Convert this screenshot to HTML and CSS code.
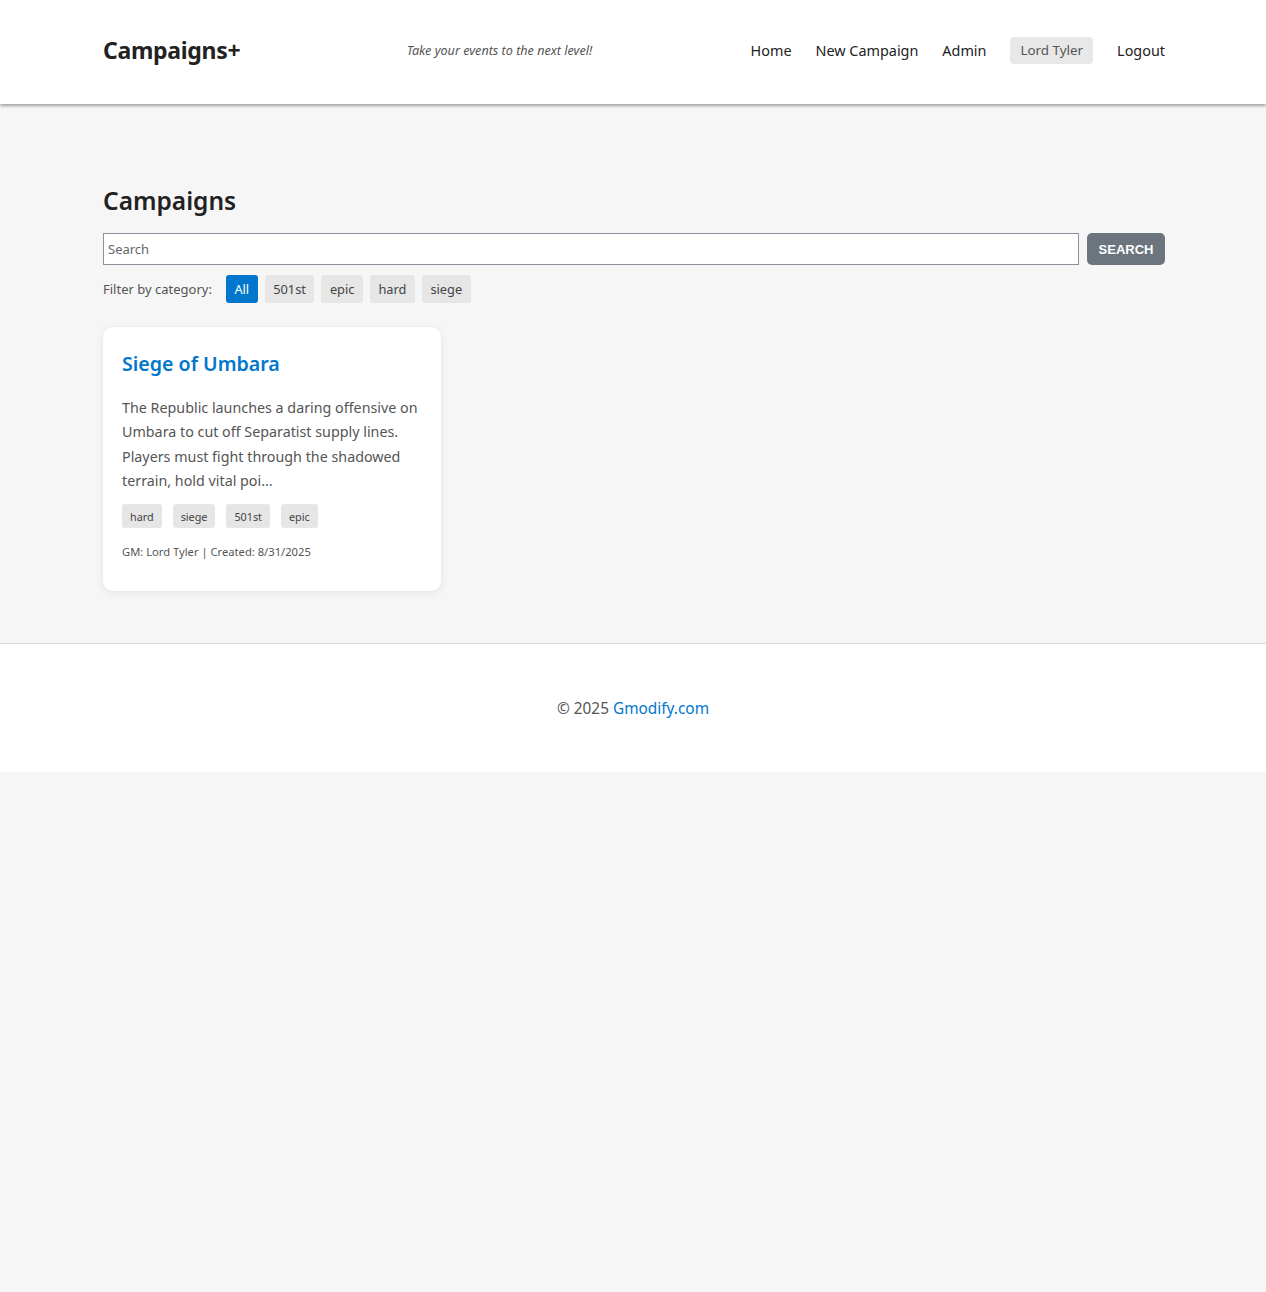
FILE: index.html
```html
<!DOCTYPE html>
<html lang="en">
<head>
<meta charset="utf-8">
<title>Campaigns+</title>
<link rel="stylesheet" href="styles.css">
</head>
<body>
<header class="site-header">
  <div class="container header-inner">
    <div class="logo">Campaigns+</div>
    <div class="tagline">Take your events to the next level!</div>
    <nav class="nav">
      <a class="nav-link" href="#">Home</a>
      <a class="nav-link" href="#">New Campaign</a>
      <a class="nav-link" href="#">Admin</a>
      <span class="nav-user">Lord Tyler</span>
      <a class="nav-link" href="#">Logout</a>
    </nav>
  </div>
</header>
<main class="container main">
  <h1 class="page-title">Campaigns</h1>
  <form class="search-row">
    <input class="search-input" type="text" placeholder="Search">
    <button class="search-btn" type="button">SEARCH</button>
  </form>
  <div class="filter-row">
    <span class="filter-label">Filter by category:</span>
    <button class="chip chip-active" type="button">All</button>
    <button class="chip" type="button">501st</button>
    <button class="chip" type="button">epic</button>
    <button class="chip" type="button">hard</button>
    <button class="chip" type="button">siege</button>
  </div>
  <div class="cards">
    <article class="card">
      <h2 class="card-title">Siege of Umbara</h2>
      <p class="card-desc">The Republic launches a daring offensive on Umbara to cut off Separatist supply lines. Players must fight through the shadowed terrain, hold vital poi...</p>
      <div class="tags">
        <span class="tag">hard</span>
        <span class="tag">siege</span>
        <span class="tag">501st</span>
        <span class="tag">epic</span>
      </div>
      <div class="card-meta">GM: Lord Tyler | Created: 8/31/2025</div>
    </article>
  </div>
</main>
<footer class="site-footer">
  <p>© 2025 <a href="#">Gmodify.com</a></p>
</footer>
</body>
</html>
```
FILE: styles.css
```css
* { box-sizing: border-box; }
html, body {
  margin: 0;
  padding: 0;
  background: #f6f6f6;
  font-family: "Segoe UI", "Noto Sans", "Open Sans", sans-serif;
  color: #333;
}
.container {
  width: 1064px;
  padding-left: 2px;
  margin: 0 auto;
}
.site-header {
  background: #fff;
  height: 104px;
  box-shadow: 0 2px 3px rgba(0,0,0,0.35);
  position: relative;
}
.header-inner {
  height: 100%;
  display: flex;
  align-items: center;
  justify-content: space-between;
  padding-bottom: 4px;
}
.logo {
  font-size: 23px;
  font-weight: 700;
  color: #222;
  letter-spacing: -0.3px;
}
.tagline {
  font-size: 12.6px;
  font-style: italic;
  color: #555;
  margin-left: 8px;
}
.nav {
  display: flex;
  align-items: center;
  gap: 24px;
}
.nav-link {
  color: #222;
  text-decoration: none;
  font-size: 14.4px;
}
.nav-user {
  background: #e8e8e8;
  color: #555;
  font-size: 13.4px;
  padding: 4px 10px;
  border-radius: 4px;
  line-height: 19px;
}
.main {
  padding-top: 80px;
  padding-bottom: 52px;
}
.page-title {
  margin: 0 0 15px;
  font-size: 24.5px;
  font-weight: 600;
  color: #222;
  line-height: 34px;
}
.search-row {
  display: flex;
  gap: 8px;
  margin: 0 0 10px;
}
.search-input {
  flex: 1;
  height: 32px;
  border: 1px solid #8f8f9d;
  border-radius: 0;
  padding: 0 4px;
  font-family: inherit;
  font-size: 13px;
  color: #333;
  background: #fff;
}
.search-input::placeholder { color: #666; }
.search-btn {
  width: 78px;
  height: 32px;
  border: 0;
  border-radius: 5px;
  background: #6c757d;
  color: #fff;
  font-family: "Liberation Sans", Arial, sans-serif;
  font-weight: 700;
  font-size: 13px;
  padding: 0;
}
.filter-row {
  display: flex;
  align-items: center;
  gap: 7px;
  margin-bottom: 24px;
}
.filter-label {
  font-size: 13px;
  color: #555;
  margin-right: 7px;
}
.chip {
  height: 28px;
  border: 0;
  border-radius: 3px;
  background: #e6e6e6;
  color: #444;
  font-family: inherit;
  font-size: 12.8px;
  padding: 0 8.5px;
}
.chip-active {
  background: #0077cc;
  color: #fff;
}
.cards {
  display: grid;
  grid-template-columns: 338px;
}
.card {
  background: #fff;
  border-radius: 10px;
  box-shadow: 0 2px 8px rgba(0,0,0,0.08);
  padding: 22px 19px 31px;
}
.card-title {
  margin: 0 0 17px;
  font-size: 19.6px;
  font-weight: 600;
  color: #0077cc;
  line-height: 30px;
}
.card-desc {
  margin: 0 0 11px;
  font-size: 14.3px;
  line-height: 24.3px;
  color: #555;
}
.tags {
  display: flex;
  gap: 11px;
  margin-bottom: 16px;
}
.tag {
  display: flex;
  align-items: center;
  height: 24px;
  background: #e6e6e6;
  color: #444;
  font-size: 10.8px;
  padding: 0 8px;
  border-radius: 3px;
}
.card-meta {
  font-size: 11.2px;
  color: #555;
  line-height: 16px;
}
.site-footer {
  background: #fff;
  border-top: 1px solid #ddd;
  height: 129px;
  display: flex;
  align-items: center;
  justify-content: center;
}
.site-footer p {
  margin: 0;
  font-size: 15.4px;
  color: #555;
}
.site-footer a {
  color: #0077cc;
  text-decoration: none;
}
```
